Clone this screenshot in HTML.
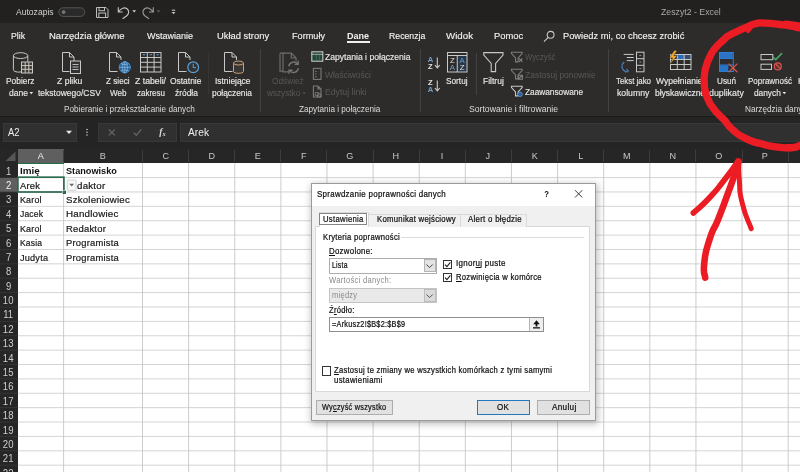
<!DOCTYPE html>
<html lang="pl"><head><meta charset="utf-8"><title>Zeszyt2 - Excel</title>
<style>
html,body{margin:0;padding:0;}
body{width:800px;height:472px;position:relative;overflow:hidden;background:#fff;font-family:"Liberation Sans", sans-serif;}
.t{position:absolute;white-space:nowrap;line-height:14px;height:14px;transform-origin:0 50%;}
#app{position:absolute;left:0;top:0;width:800px;height:472px;overflow:hidden;will-change:transform;}
.b{position:absolute;box-sizing:border-box;}
svg{position:absolute;overflow:visible;}

.dlgbtn{position:absolute;box-sizing:border-box;background:#e1e1e1;border:1px solid #adadad;}

</style></head><body>
<div id="app">
<div class="b" style="left:0.00px;top:0.00px;width:800.00px;height:23.00px;background:#222120;"></div>
<div class="b" style="left:0.00px;top:23.00px;width:800.00px;height:93.50px;background:#2d2c2b;"></div>
<div class="b" style="left:0.00px;top:116.50px;width:800.00px;height:32.50px;background:#242424;"></div>
<div class="b" style="left:0.00px;top:116.00px;width:800.00px;height:1.00px;background:#1b1b1b;"></div>
<div class="b" style="left:3.00px;top:123.00px;width:74.00px;height:19.00px;background:#303030;border:1px solid #383838;"></div>
<div class="b" style="left:98.00px;top:123.00px;width:79.00px;height:19.00px;background:#303030;border:1px solid #383838;"></div>
<div class="b" style="left:179.50px;top:123.00px;width:621.00px;height:19.00px;background:#303030;border:1px solid #383838;"></div>
<div class="b" style="left:0.00px;top:149.00px;width:800.00px;height:14.20px;background:#262626;"></div>
<div class="b" style="left:0.00px;top:163.20px;width:17.90px;height:308.80px;background:#262626;"></div>
<div class="b" style="left:17.90px;top:149.00px;width:45.70px;height:14.20px;background:#5f5f5f;"></div>
<div class="b" style="left:0.00px;top:177.58px;width:17.90px;height:14.38px;background:#5f5f5f;"></div>
<svg style="left:0;top:149px" width="18" height="14"><path d="M15.5 2.5 L15.5 12 L5.5 12 Z" fill="#555"/></svg>
<div class="b" style="left:63.10px;top:150.00px;width:1.00px;height:12.20px;background:#3d3d3d;"></div>
<div class="b" style="left:142.00px;top:150.00px;width:1.00px;height:12.20px;background:#3d3d3d;"></div>
<div class="b" style="left:188.12px;top:150.00px;width:1.00px;height:12.20px;background:#3d3d3d;"></div>
<div class="b" style="left:234.24px;top:150.00px;width:1.00px;height:12.20px;background:#3d3d3d;"></div>
<div class="b" style="left:280.36px;top:150.00px;width:1.00px;height:12.20px;background:#3d3d3d;"></div>
<div class="b" style="left:326.48px;top:150.00px;width:1.00px;height:12.20px;background:#3d3d3d;"></div>
<div class="b" style="left:372.60px;top:150.00px;width:1.00px;height:12.20px;background:#3d3d3d;"></div>
<div class="b" style="left:418.72px;top:150.00px;width:1.00px;height:12.20px;background:#3d3d3d;"></div>
<div class="b" style="left:464.84px;top:150.00px;width:1.00px;height:12.20px;background:#3d3d3d;"></div>
<div class="b" style="left:510.96px;top:150.00px;width:1.00px;height:12.20px;background:#3d3d3d;"></div>
<div class="b" style="left:557.08px;top:150.00px;width:1.00px;height:12.20px;background:#3d3d3d;"></div>
<div class="b" style="left:603.20px;top:150.00px;width:1.00px;height:12.20px;background:#3d3d3d;"></div>
<div class="b" style="left:649.32px;top:150.00px;width:1.00px;height:12.20px;background:#3d3d3d;"></div>
<div class="b" style="left:695.44px;top:150.00px;width:1.00px;height:12.20px;background:#3d3d3d;"></div>
<div class="b" style="left:741.56px;top:150.00px;width:1.00px;height:12.20px;background:#3d3d3d;"></div>
<div class="b" style="left:787.68px;top:150.00px;width:1.00px;height:12.20px;background:#3d3d3d;"></div>
<div class="b" style="left:833.80px;top:150.00px;width:1.00px;height:12.20px;background:#3d3d3d;"></div>
<svg style="left:0;top:0" width="800" height="472" fill="none" stroke-width="0.75"><path d="M63.60 163.20 V472" stroke="#bcbcbc"/><path d="M142.50 163.20 V472" stroke="#bcbcbc"/><path d="M188.62 163.20 V472" stroke="#bcbcbc"/><path d="M234.74 163.20 V472" stroke="#bcbcbc"/><path d="M280.86 163.20 V472" stroke="#bcbcbc"/><path d="M326.98 163.20 V472" stroke="#bcbcbc"/><path d="M373.10 163.20 V472" stroke="#bcbcbc"/><path d="M419.22 163.20 V472" stroke="#bcbcbc"/><path d="M465.34 163.20 V472" stroke="#bcbcbc"/><path d="M511.46 163.20 V472" stroke="#bcbcbc"/><path d="M557.58 163.20 V472" stroke="#bcbcbc"/><path d="M603.70 163.20 V472" stroke="#bcbcbc"/><path d="M649.82 163.20 V472" stroke="#bcbcbc"/><path d="M695.94 163.20 V472" stroke="#bcbcbc"/><path d="M742.06 163.20 V472" stroke="#bcbcbc"/><path d="M788.18 163.20 V472" stroke="#bcbcbc"/><path d="M17.90 177.58 H800" stroke="#c6c6c6"/><path d="M0 177.58 H17.90" stroke="#3a3a3a"/><path d="M17.90 191.96 H800" stroke="#c6c6c6"/><path d="M0 191.96 H17.90" stroke="#3a3a3a"/><path d="M17.90 206.34 H800" stroke="#c6c6c6"/><path d="M0 206.34 H17.90" stroke="#3a3a3a"/><path d="M17.90 220.72 H800" stroke="#c6c6c6"/><path d="M0 220.72 H17.90" stroke="#3a3a3a"/><path d="M17.90 235.10 H800" stroke="#c6c6c6"/><path d="M0 235.10 H17.90" stroke="#3a3a3a"/><path d="M17.90 249.48 H800" stroke="#c6c6c6"/><path d="M0 249.48 H17.90" stroke="#3a3a3a"/><path d="M17.90 263.86 H800" stroke="#c6c6c6"/><path d="M0 263.86 H17.90" stroke="#3a3a3a"/><path d="M17.90 278.24 H800" stroke="#c6c6c6"/><path d="M0 278.24 H17.90" stroke="#3a3a3a"/><path d="M17.90 292.62 H800" stroke="#c6c6c6"/><path d="M0 292.62 H17.90" stroke="#3a3a3a"/><path d="M17.90 307.00 H800" stroke="#c6c6c6"/><path d="M0 307.00 H17.90" stroke="#3a3a3a"/><path d="M17.90 321.38 H800" stroke="#c6c6c6"/><path d="M0 321.38 H17.90" stroke="#3a3a3a"/><path d="M17.90 335.76 H800" stroke="#c6c6c6"/><path d="M0 335.76 H17.90" stroke="#3a3a3a"/><path d="M17.90 350.14 H800" stroke="#c6c6c6"/><path d="M0 350.14 H17.90" stroke="#3a3a3a"/><path d="M17.90 364.52 H800" stroke="#c6c6c6"/><path d="M0 364.52 H17.90" stroke="#3a3a3a"/><path d="M17.90 378.90 H800" stroke="#c6c6c6"/><path d="M0 378.90 H17.90" stroke="#3a3a3a"/><path d="M17.90 393.28 H800" stroke="#c6c6c6"/><path d="M0 393.28 H17.90" stroke="#3a3a3a"/><path d="M17.90 407.66 H800" stroke="#c6c6c6"/><path d="M0 407.66 H17.90" stroke="#3a3a3a"/><path d="M17.90 422.04 H800" stroke="#c6c6c6"/><path d="M0 422.04 H17.90" stroke="#3a3a3a"/><path d="M17.90 436.42 H800" stroke="#c6c6c6"/><path d="M0 436.42 H17.90" stroke="#3a3a3a"/><path d="M17.90 450.80 H800" stroke="#c6c6c6"/><path d="M0 450.80 H17.90" stroke="#3a3a3a"/><path d="M17.90 465.18 H800" stroke="#c6c6c6"/><path d="M0 465.18 H17.90" stroke="#3a3a3a"/><path d="M17.90 479.56 H800" stroke="#c6c6c6"/><path d="M0 479.56 H17.90" stroke="#3a3a3a"/></svg>
<div class="b" style="left:17.90px;top:162.50px;width:45.90px;height:1.00px;background:#1f7145;"></div>
<div class="b" style="left:16.90px;top:177.58px;width:1.20px;height:14.38px;background:#1f7145;"></div>
<svg style="left:0;top:0" width="100" height="200" fill="none"><rect x="17.900" y="177.200" width="46" height="14.800" stroke="#2c6a4e" stroke-width="1.700"/><rect x="62" y="190" width="4.200" height="4.200" fill="#ffffff"/><rect x="62.600" y="190.600" width="3.400" height="3.400" fill="#2c6a4e"/></svg>
<svg style="left:0;top:0" width="100" height="200"><rect x="67.300" y="180" width="8.800" height="10.400" rx="0.800" fill="#f8f8f8" stroke="#cdcdcd" stroke-width="0.900"/><path d="M69.300 183.700 h4.800 l-2.400 2.800 z" fill="#6a6a6a"/></svg>
<div class="b" style="left:305.00px;top:179.00px;width:297.00px;height:250.00px;background:transparent;box-shadow:1px 2px 7px 1px rgba(0,0,0,0.25);left:311px;top:183px;width:285px;height:238px;"></div>
<div class="b" style="left:311.00px;top:183.00px;width:285.00px;height:238.00px;background:#f0f0f0;border:1px solid #9a9a9a;"></div>
<div class="b" style="left:312.00px;top:184.00px;width:283.00px;height:22.00px;background:#ffffff;"></div>
<div class="b" style="left:315.00px;top:226.00px;width:274.50px;height:165.50px;background:#ffffff;border:1px solid #d9d9d9;"></div>
<div class="b" style="left:319.00px;top:211.50px;width:49.50px;height:15.50px;background:#ffffff;border:1px solid #d9d9d9;border-bottom:none;"></div>
<div class="b" style="left:319.40px;top:213.00px;width:48.00px;height:12.00px;background:transparent;border:1px solid #858585;"></div>
<div class="b" style="left:368.50px;top:214.00px;width:92.50px;height:12.50px;background:#f0f0f0;border:1px solid #d9d9d9;border-bottom:none;border-left:none;"></div>
<div class="b" style="left:461.00px;top:214.00px;width:66.00px;height:12.50px;background:#f0f0f0;border:1px solid #d9d9d9;border-bottom:none;border-left:none;"></div>
<div class="b" style="left:401.00px;top:236.80px;width:183.00px;height:1.00px;background:#dcdcdc;"></div>
<div class="b" style="left:328.50px;top:258.00px;width:108.00px;height:15.50px;background:#ffffff;border:1px solid #adadad;"></div>
<div class="b" style="left:423.80px;top:259.20px;width:11.80px;height:13.20px;background:#e3e3e3;border:1px solid #b4b4b4;"></div>
<svg style="left:426.3px;top:264px" width="8" height="5"><path d="M0.5 0.5 L3.6 3.6 L6.7 0.5" fill="none" stroke="#444" stroke-width="1"/></svg>
<div class="b" style="left:328.50px;top:287.50px;width:108.00px;height:15.50px;background:#e9e9e9;border:1px solid #c4c4c4;"></div>
<div class="b" style="left:423.80px;top:288.70px;width:11.80px;height:13.20px;background:#dadada;border:1px solid #bdbdbd;"></div>
<svg style="left:426.3px;top:293.5px" width="8" height="5"><path d="M0.5 0.5 L3.6 3.6 L6.7 0.5" fill="none" stroke="#555" stroke-width="1"/></svg>
<div class="b" style="left:328.50px;top:317.00px;width:215.50px;height:15.00px;background:#ffffff;border:1px solid #8f8f8f;"></div>
<div class="b" style="left:528.50px;top:318.00px;width:14.50px;height:13.00px;background:#efefef;border-left:1px solid #b5b5b5;"></div>
<svg style="left:531.5px;top:320px" width="9" height="9"><path d="M4.5 0.3 L7.8 4.2 L5.4 4.2 L5.4 6.4 L3.6 6.4 L3.6 4.2 L1.2 4.2 Z" fill="#111"/><rect x="1" y="7.2" width="7" height="1.3" fill="#111"/></svg>
<div class="b" style="left:443.20px;top:259.60px;width:9.20px;height:9.20px;background:#ffffff;border:1px solid #333;"></div>
<svg style="left:443.2px;top:259.6px" width="10" height="10"><path d="M2 4.7 L3.9 6.7 L7.4 2.4" fill="none" stroke="#222" stroke-width="1.1"/></svg>
<div class="b" style="left:443.20px;top:273.00px;width:9.20px;height:9.20px;background:#ffffff;border:1px solid #333;"></div>
<svg style="left:443.2px;top:273px" width="10" height="10"><path d="M2 4.7 L3.9 6.7 L7.4 2.4" fill="none" stroke="#222" stroke-width="1.1"/></svg>
<div class="b" style="left:322.20px;top:366.40px;width:9.20px;height:9.20px;background:#ffffff;border:1px solid #333;"></div>
<div class="dlgbtn" style="left:315.5px;top:399.5px;width:77.5px;height:15.5px;"></div>
<div class="dlgbtn" style="left:476.5px;top:399.5px;width:53.5px;height:15.5px;border:1.8px solid #2377bd;"></div>
<div class="dlgbtn" style="left:537px;top:399.5px;width:53px;height:15.5px;"></div>
<svg style="left:0;top:0" width="200" height="24" fill="none" stroke="#c8c8c8" stroke-width="1">
<rect x="58.8" y="7.8" width="26" height="8.6" rx="4.3" stroke="#555" fill="#2a2a2a"/>
<circle cx="63.6" cy="12.1" r="1.9" fill="#767676" stroke="none"/>
<g stroke="#bdbdbd"><path d="M96.5 7.5 h9.5 l2 2 v8 h-11.5 z"/><rect x="99" y="7.5" width="5.5" height="3.2"/><rect x="98.800" y="13" width="6.800" height="4.500"/></g>
<path d="M118.300 7.200 V12 H122.600 M118.500 11.800 C121 8 124.500 7 127 8.800 C129.600 10.800 129 14 126.500 16 L122.600 18.800" stroke="#c4c4c4" stroke-width="1.100"/>
<path d="M132.300 10.300 h3.800 l-1.900 2.300z" fill="#d0d0d0" stroke="none"/>
<path d="M153.300 7.200 V12 H149 M153.100 11.800 C150.600 8 147.100 7 144.600 8.800 C142 10.800 142.600 14 145.100 16 L149 18.800" stroke="#9a9a9a" stroke-width="1.100"/>
<path d="M156.600 10.300 h3.800 l-1.900 2.300z" fill="#5a5a5a" stroke="none"/>
<path d="M171.800 10.200 h3.400" stroke="#c4c4c4" stroke-width="1.100"/><path d="M171.600 12 h3.800 l-1.900 2.200z" fill="#c4c4c4" stroke="none"/>
</svg>
<div class="b" style="left:346.50px;top:41.20px;width:23.00px;height:2.00px;background:#f0f0f0;"></div>
<svg style="left:543px;top:30px" width="13" height="13" fill="none" stroke="#c8c8c8" stroke-width="1.1"><circle cx="7.6" cy="4.8" r="3.4"/><path d="M5.2 7.3 L1 11.6"/></svg>
<div class="b" style="left:259.70px;top:49.00px;width:1.00px;height:63.00px;background:#424242;"></div>
<div class="b" style="left:419.80px;top:49.00px;width:1.00px;height:63.00px;background:#424242;"></div>
<div class="b" style="left:607.50px;top:49.00px;width:1.00px;height:63.00px;background:#424242;"></div>
<div class="b" style="left:475.50px;top:53.00px;width:1.00px;height:42.00px;background:#424242;"></div>
<div class="b" style="left:207.50px;top:53.00px;width:1.00px;height:42.00px;background:#363534;"></div>
<svg style="left:0;top:0" width="800" height="117" fill="none" stroke="#c8c8c8" stroke-width="1">
<!-- Pobierz dane -->
<path d="M13.400 55.600 v14 c0 2.800 8 3.200 8.200 1.600 M27.800 55.600 v6"/><ellipse cx="20.600" cy="55.600" rx="7.200" ry="2.900"/>
<rect x="21.5" y="62" width="11" height="11" fill="#3b3b3b"/><path d="M21.5 65.6 h11 M21.5 69.3 h11 M25.2 62 v11 M28.8 62 v11" stroke="#cfc8b8"/>
<!-- Z pliku tekstowego -->
<path d="M62.5 52.5 h7 l4.5 4.5 v4 M62.5 52.5 v19 h7 M69.5 52.5 v4.5 h4.5"/>
<rect x="70.5" y="61" width="10" height="12.5" fill="#333"/><path d="M72.5 64.5 h6 M72.5 67 h6 M72.5 69.5 h6" stroke-width="0.9"/>
<!-- Z sieci Web -->
<path d="M109.5 52.5 h7 l4.5 4.5 v3 M109.5 52.5 v19 h8 M116.5 52.5 v4.5 h4.5"/>
<circle cx="124.8" cy="67.3" r="5.6" fill="#245f96" stroke="#3f86c4"/><path d="M119.2 67.3 h11.2 M124.8 61.7 v11.2 M121 63.5 c2.5 1.5 5 1.5 7.6 0 M121 71 c2.5 -1.5 5 -1.5 7.6 0" stroke="#8fc0e8" stroke-width="0.7"/><ellipse cx="124.8" cy="67.3" rx="2.6" ry="5.6" stroke="#8fc0e8" stroke-width="0.7"/>
<!-- Z tabeli/zakresu -->
<rect x="140.5" y="52.5" width="20.5" height="19.5"/><path d="M140.5 57.5 h20.5 M140.5 62.3 h20.5 M140.5 67.1 h20.5 M147.3 52.5 v19.5 M154.1 52.5 v19.5"/>
<path d="M143 54 l1 1.3 l1-1.3 M149.8 54 l1 1.3 l1-1.3 M156.6 54 l1 1.3 l1-1.3" stroke="#5aa7e6" stroke-width="0.9"/>
<!-- Ostatnie zrodla -->
<path d="M178.5 52.5 h7 l4.5 4.5 v3 M178.5 52.5 v19 h8 M185.5 52.5 v4.5 h4.5"/>
<circle cx="193.2" cy="67.3" r="5.4" fill="#333" stroke="#5aa0d8" stroke-width="1.2"/><path d="M193.2 63.8 v3.8 h2.8" stroke="#5aa0d8"/>
<!-- Istniejace polaczenia -->
<path d="M224.5 52.5 h7.5 l4.5 4.5 v3 M224.5 52.5 v19 h8 M232 52.5 v4.5 h4.5"/>
<path d="M233.5 63 v8.5 c0 2.4 10 2.4 10 0 v-8.5" fill="#3a3632" stroke="#c9a27a"/><ellipse cx="238.5" cy="63" rx="5" ry="2" fill="#3a3632" stroke="#c9a27a"/>
<!-- Odswiez wszystko (dim) -->
<g stroke="#6c6c6c" stroke-width="1.200"><path d="M280 53.200 h4.500 M280 53.200 v18 h3"/><path d="M283 53.200 h8.300 l4.800 4.800 v3 M283 53.200 v18.600 h5 M291.300 53.200 v4.800 h4.800"/>
<path d="M288.800 66.400 a4.900 4.900 0 0 1 8.900 -2.200 M298.400 68.200 a4.900 4.900 0 0 1 -8.900 2.200 M298.200 60.800 v3.600 h-3.600 M289 73.800 v-3.600 h3.600" stroke="#757575" stroke-width="1.400"/></g>
<!-- small icons queries group -->
<rect x="311.800" y="51.800" width="11" height="9.400" fill="#23453a" stroke="#c8c8c8" stroke-width="1.100"/><path d="M311.800 54.300 h11" stroke="#c8c8c8" stroke-width="0.800"/><path d="M316.400 55 v5.600 M319.600 55 v5.600" stroke="#44705f" stroke-width="0.900"/>
<g stroke="#7a7a7a" stroke-width="1.100"><rect x="313.400" y="68.400" width="7.600" height="11"/><path d="M315.200 71.400 h1.400 M315.200 74 h1.400 M315.200 76.600 h1.400 M318.200 71.400 h0.100 M318.200 74 h0.100" />
<path d="M313.400 86 h4.600 l3 3 v8 h-7.600 z M318 86 v3 h3"/><path d="M315.200 92.600 h3.600 v3 h-3.600z M317.400 94 h3.400 v3 h-3.400z" stroke-width="0.900"/></g>
<!-- sort small -->
<path d="M437.300 57.600 v10 M434.900 65.200 l2.400 2.800 l2.400 -2.800" stroke-width="1.100"/>
<path d="M437.300 80.400 v10 M434.900 88 l2.400 2.800 l2.400 -2.800" stroke-width="1.100"/>
<!-- Sortuj big -->
<rect x="457.400" y="55.600" width="9.400" height="16.200" fill="#27384a" stroke="none"/>
<rect x="447.500" y="52.500" width="19.500" height="19.500"/><path d="M447.500 55.500 h19.500 M457.250 55.500 v16.500"/>
<!-- Filtruj big -->
<path d="M483.800 52.600 h19.200 v2.400 l-7.400 8.400 v8.200 h-4.400 v-8.200 l-7.400 -8.400 z" stroke-width="1.100"/>
<!-- small funnels -->
<g stroke="#7d7d7d" stroke-width="1.100"><path d="M511.500 52.300 h10.600 v1.200 l-4 4.400 v4 h-2.600 v-4 l-4 -4.400 z"/><path d="M519 58.500 l3.400 3.400 M522.400 58.500 l-3.400 3.400" stroke="#808080"/>
<path d="M511.500 69.300 h10.600 v1.200 l-4 4.400 v4 h-2.600 v-4 l-4 -4.400 z"/><path d="M518.400 75.200 h4 v4 h-4z M518.400 79.200 l4 -4" stroke="#808080" fill="#2d2c2b"/></g>
<path d="M511.500 86.300 h10.600 v1.200 l-4 4.400 v4 h-2.600 v-4 l-4 -4.400 z" stroke-width="1.100"/><circle cx="520" cy="94.300" r="2.300" fill="#2d5f94" stroke="#5a93cc" stroke-width="0.900"/>
<!-- Tekst jako kolumny -->
<path d="M623.700 54.400 h10 M626.800 57.500 h6.900 M626.800 60.600 h6.900" stroke-width="1"/>
<path d="M624.300 62 c-3.500 2.500 -3.200 8.500 2.400 9.600 M624.800 71.800 l3.600 -0.200 M628.600 71.500 l-2 -2.600" stroke="#4a7fb5" stroke-width="1.200"/>
<rect x="636.500" y="52.200" width="7.500" height="19.600"/><path d="M636.500 58.700 h7.500 M636.500 65.300 h7.500"/><path d="M639.300 55.500 h2 M639.300 62 h2 M639.300 68.600 h2" stroke="#8d8d8d"/>
<!-- Wypelnianie blyskawiczne -->
<rect x="677.500" y="54.800" width="7" height="4.700" fill="#2c6cb8" stroke="none"/><rect x="684.500" y="54.800" width="6.300" height="4.700" fill="#34506e" stroke="none"/>
<rect x="670.500" y="54.500" width="20.500" height="15"/><path d="M670.500 59.500 h20.500 M670.500 64.500 h20.500 M677.300 54.500 v15 M684.200 54.500 v15"/>
<path d="M674.200 50.400 l-5 7.600 h3.300 l-2.600 6.400 l7.400 -9 h-3.400 l3.300 -5 z" fill="#f2a62a" stroke="#2e2e2e" stroke-width="0.500"/>
<!-- Usun duplikaty -->
<rect x="719.500" y="52.500" width="13.800" height="19" stroke="#2f7fd6"/><path d="M719.500 58.500 h13.800 M719.500 65 h13.800" stroke="#2f7fd6"/><rect x="720" y="53" width="12.800" height="5.200" fill="#2a72c4" stroke="none"/><rect x="720" y="65.300" width="8.300" height="5.800" fill="#2a72c4" stroke="none"/>
<path d="M728.600 63.600 l8.800 8.600 M737.400 63.600 l-8.800 8.600" stroke="#d9534f" stroke-width="1.300"/>
<!-- Poprawnosc danych -->
<rect x="761" y="54.500" width="11.800" height="5.200"/><rect x="761" y="64.200" width="10.500" height="5.200"/>
<path d="M773 57 l2.700 2.600 l6.400 -6.500" stroke="#48a868" stroke-width="1.500"/>
<circle cx="777.800" cy="66.400" r="3.500" fill="#5a2f2d" stroke="#d9534f" stroke-width="1.200"/><path d="M775.700 64 l4.600 4.600" stroke="#d9534f" stroke-width="1.300"/>
</svg>
<svg style="left:0;top:116px" width="200" height="32" fill="none">
<path d="M66 14.800 h6 l-3 3.300 z" fill="#e8e8e8"/>
<circle cx="87" cy="13.500" r="0.750" fill="#d0d0d0"/><circle cx="87" cy="16.200" r="0.750" fill="#d0d0d0"/><circle cx="87" cy="18.900" r="0.750" fill="#d0d0d0"/>
<path d="M108.800 13.300 l6 6 M114.800 13.300 l-6 6" stroke="#6a6a6a" stroke-width="1.100"/>
<path d="M133.800 16.600 l2.500 2.700 l5 -6" stroke="#6a6a6a" stroke-width="1.200"/>
</svg><svg style="left:0;top:0" width="800" height="472">
<path d="M29.500 92 h3.600 l-1.800 2.200z" fill="#e8e8e8"/>
<path d="M302.500 92.200 h3.200 l-1.600 2z" fill="#565656"/>
<path d="M782.500 92 h3.600 l-1.800 2.200z" fill="#e8e8e8"/>
<path d="M575 190.200 l7.300 7.300 M582.300 190.200 l-7.300 7.300" stroke="#222" stroke-width="0.900" fill="none"/>
</svg>
<span class="t" id="t0" style="left:15.80px;top:5.00px;font-size:9.1px;color:#d0d0d0;font-weight:400;transform:scaleX(0.9415);">Autozapis</span>
<span class="t" id="t1" style="left:661.00px;top:4.60px;font-size:9.3px;color:#a9a9a9;font-weight:400;transform:scaleX(0.9395);">Zeszyt2  -  Excel</span>
<span class="t" id="t2" style="left:11.40px;top:28.60px;font-size:9.9px;color:#f0f0f0;font-weight:400;transform:scaleX(0.8793);-webkit-text-stroke:0.15px #f0f0f0;">Plik</span>
<span class="t" id="t3" style="left:49.00px;top:28.60px;font-size:9.9px;color:#f0f0f0;font-weight:400;transform:scaleX(0.9618);-webkit-text-stroke:0.15px #f0f0f0;">Narzędzia główne</span>
<span class="t" id="t4" style="left:146.90px;top:28.60px;font-size:9.9px;color:#f0f0f0;font-weight:400;transform:scaleX(0.9129);-webkit-text-stroke:0.15px #f0f0f0;">Wstawianie</span>
<span class="t" id="t5" style="left:216.50px;top:28.60px;font-size:9.9px;color:#f0f0f0;font-weight:400;transform:scaleX(0.9492);-webkit-text-stroke:0.15px #f0f0f0;">Układ strony</span>
<span class="t" id="t6" style="left:292.00px;top:28.60px;font-size:9.9px;color:#f0f0f0;font-weight:400;transform:scaleX(0.9251);-webkit-text-stroke:0.15px #f0f0f0;">Formuły</span>
<span class="t" id="t7" style="left:346.90px;top:28.60px;font-size:9.9px;color:#f0f0f0;font-weight:700;transform:scaleX(0.9149);">Dane</span>
<span class="t" id="t8" style="left:388.60px;top:28.60px;font-size:9.9px;color:#f0f0f0;font-weight:400;transform:scaleX(0.8817);-webkit-text-stroke:0.15px #f0f0f0;">Recenzja</span>
<span class="t" id="t9" style="left:446.00px;top:28.60px;font-size:9.9px;color:#f0f0f0;font-weight:400;transform:scaleX(0.9841);-webkit-text-stroke:0.15px #f0f0f0;">Widok</span>
<span class="t" id="t10" style="left:493.50px;top:28.60px;font-size:9.9px;color:#f0f0f0;font-weight:400;transform:scaleX(0.9501);-webkit-text-stroke:0.15px #f0f0f0;">Pomoc</span>
<span class="t" id="t11" style="left:562.60px;top:28.60px;font-size:9.9px;color:#f0f0f0;font-weight:400;transform:scaleX(0.9405);-webkit-text-stroke:0.15px #f0f0f0;">Powiedz mi, co chcesz zrobić</span>
<span class="t" id="t12" style="left:6.40px;top:74.40px;font-size:9.4px;color:#e8e8e8;font-weight:400;transform:scaleX(0.8932);-webkit-text-stroke:0.15px #e8e8e8;">Pobierz</span>
<span class="t" id="t13" style="left:8.90px;top:85.90px;font-size:9.4px;color:#e8e8e8;font-weight:400;transform:scaleX(0.9157);-webkit-text-stroke:0.15px #e8e8e8;">dane</span>
<span class="t" id="t14" style="left:57.20px;top:74.40px;font-size:9.4px;color:#e8e8e8;font-weight:400;transform:scaleX(0.9195);-webkit-text-stroke:0.15px #e8e8e8;">Z pliku</span>
<span class="t" id="t15" style="left:38.10px;top:85.90px;font-size:9.4px;color:#e8e8e8;font-weight:400;transform:scaleX(0.9060);-webkit-text-stroke:0.15px #e8e8e8;">tekstowego/CSV</span>
<span class="t" id="t16" style="left:106.00px;top:74.40px;font-size:9.4px;color:#e8e8e8;font-weight:400;transform:scaleX(0.8710);-webkit-text-stroke:0.15px #e8e8e8;">Z sieci</span>
<span class="t" id="t17" style="left:109.80px;top:85.90px;font-size:9.4px;color:#e8e8e8;font-weight:400;transform:scaleX(0.8635);-webkit-text-stroke:0.15px #e8e8e8;">Web</span>
<span class="t" id="t18" style="left:134.70px;top:74.40px;font-size:9.4px;color:#e8e8e8;font-weight:400;transform:scaleX(0.9293);-webkit-text-stroke:0.15px #e8e8e8;">Z tabeli/</span>
<span class="t" id="t19" style="left:136.70px;top:85.90px;font-size:9.4px;color:#e8e8e8;font-weight:400;transform:scaleX(0.8529);-webkit-text-stroke:0.15px #e8e8e8;">zakresu</span>
<span class="t" id="t20" style="left:170.40px;top:74.40px;font-size:9.4px;color:#e8e8e8;font-weight:400;transform:scaleX(0.8991);-webkit-text-stroke:0.15px #e8e8e8;">Ostatnie</span>
<span class="t" id="t21" style="left:174.80px;top:85.90px;font-size:9.4px;color:#e8e8e8;font-weight:400;transform:scaleX(0.8964);-webkit-text-stroke:0.15px #e8e8e8;">źródła</span>
<span class="t" id="t22" style="left:214.50px;top:74.40px;font-size:9.4px;color:#e8e8e8;font-weight:400;transform:scaleX(0.8963);-webkit-text-stroke:0.15px #e8e8e8;">Istniejące</span>
<span class="t" id="t23" style="left:212.00px;top:85.90px;font-size:9.4px;color:#e8e8e8;font-weight:400;transform:scaleX(0.8923);-webkit-text-stroke:0.15px #e8e8e8;">połączenia</span>
<span class="t" id="t24" style="left:445.70px;top:74.40px;font-size:9.4px;color:#e8e8e8;font-weight:400;transform:scaleX(0.8816);-webkit-text-stroke:0.15px #e8e8e8;">Sortuj</span>
<span class="t" id="t25" style="left:483.40px;top:74.40px;font-size:9.4px;color:#e8e8e8;font-weight:400;transform:scaleX(0.9074);-webkit-text-stroke:0.15px #e8e8e8;">Filtruj</span>
<span class="t" id="t26" style="left:615.80px;top:74.40px;font-size:9.4px;color:#e8e8e8;font-weight:400;transform:scaleX(0.8396);-webkit-text-stroke:0.15px #e8e8e8;">Tekst jako</span>
<span class="t" id="t27" style="left:617.30px;top:85.90px;font-size:9.4px;color:#e8e8e8;font-weight:400;transform:scaleX(0.9249);-webkit-text-stroke:0.15px #e8e8e8;">kolumny</span>
<span class="t" id="t28" style="left:656.40px;top:74.40px;font-size:9.4px;color:#e8e8e8;font-weight:400;transform:scaleX(0.9137);-webkit-text-stroke:0.15px #e8e8e8;">Wypełnianie</span>
<span class="t" id="t29" style="left:655.40px;top:85.90px;font-size:9.4px;color:#e8e8e8;font-weight:400;transform:scaleX(0.9070);-webkit-text-stroke:0.15px #e8e8e8;">błyskawiczne</span>
<span class="t" id="t30" style="left:716.90px;top:74.40px;font-size:9.4px;color:#e8e8e8;font-weight:400;transform:scaleX(0.8725);-webkit-text-stroke:0.15px #e8e8e8;">Usuń</span>
<span class="t" id="t31" style="left:708.80px;top:85.90px;font-size:9.4px;color:#e8e8e8;font-weight:400;transform:scaleX(0.9401);-webkit-text-stroke:0.15px #e8e8e8;">duplikaty</span>
<span class="t" id="t32" style="left:747.90px;top:74.40px;font-size:9.4px;color:#e8e8e8;font-weight:400;transform:scaleX(0.8528);-webkit-text-stroke:0.15px #e8e8e8;">Poprawność</span>
<span class="t" id="t33" style="left:753.70px;top:85.90px;font-size:9.4px;color:#e8e8e8;font-weight:400;transform:scaleX(0.8864);-webkit-text-stroke:0.15px #e8e8e8;">danych</span>
<span class="t" id="t34" style="left:797.70px;top:74.40px;font-size:9.4px;color:#e8e8e8;font-weight:400;transform:scaleX(0.9315);-webkit-text-stroke:0.15px #e8e8e8;">Konsoliduj</span>
<span class="t" id="t35" style="left:272.00px;top:74.40px;font-size:9.4px;color:#585858;font-weight:400;transform:scaleX(0.8817);">Odśwież</span>
<span class="t" id="t36" style="left:267.30px;top:85.90px;font-size:9.4px;color:#585858;font-weight:400;transform:scaleX(0.8730);">wszystko</span>
<span class="t" id="t37" style="left:325.00px;top:50.30px;font-size:9.4px;color:#e8e8e8;font-weight:400;transform:scaleX(0.9164);-webkit-text-stroke:0.15px #e8e8e8;">Zapytania i połączenia</span>
<span class="t" id="t38" style="left:325.00px;top:67.50px;font-size:9.4px;color:#585858;font-weight:400;transform:scaleX(0.8972);">Właściwości</span>
<span class="t" id="t39" style="left:325.00px;top:84.60px;font-size:9.4px;color:#585858;font-weight:400;transform:scaleX(0.9261);">Edytuj linki</span>
<span class="t" id="t40" style="left:525.00px;top:50.30px;font-size:9.4px;color:#585858;font-weight:400;transform:scaleX(0.8264);">Wyczyść</span>
<span class="t" id="t41" style="left:525.00px;top:67.50px;font-size:9.4px;color:#585858;font-weight:400;transform:scaleX(0.9042);">Zastosuj ponownie</span>
<span class="t" id="t42" style="left:525.00px;top:84.60px;font-size:9.4px;color:#e8e8e8;font-weight:400;transform:scaleX(0.8832);-webkit-text-stroke:0.15px #e8e8e8;">Zaawansowane</span>
<span class="t" id="t43" style="left:63.50px;top:102.40px;font-size:9.3px;color:#dcdcdc;font-weight:400;transform:scaleX(0.8825);">Pobieranie i przekształcanie danych</span>
<span class="t" id="t44" style="left:298.60px;top:102.40px;font-size:9.3px;color:#dcdcdc;font-weight:400;transform:scaleX(0.8799);">Zapytania i połączenia</span>
<span class="t" id="t45" style="left:468.60px;top:102.40px;font-size:9.3px;color:#dcdcdc;font-weight:400;transform:scaleX(0.9309);">Sortowanie i filtrowanie</span>
<span class="t" id="t46" style="left:744.90px;top:102.40px;font-size:9.3px;color:#dcdcdc;font-weight:400;transform:scaleX(0.8882);">Narzędzia danych</span>
<span class="t" id="t47" style="left:430.40px;top:52.90px;font-size:7.6px;color:#6f9fcb;font-weight:700;transform:translateX(-50%);">A</span>
<span class="t" id="t48" style="left:430.40px;top:59.50px;font-size:7.6px;color:#e0e0e0;font-weight:700;transform:translateX(-50%);">Z</span>
<span class="t" id="t49" style="left:430.40px;top:75.90px;font-size:7.6px;color:#e0e0e0;font-weight:700;transform:translateX(-50%);">Z</span>
<span class="t" id="t50" style="left:430.40px;top:82.50px;font-size:7.6px;color:#6f9fcb;font-weight:700;transform:translateX(-50%);">A</span>
<span class="t" id="t51" style="left:452.40px;top:53.60px;font-size:7.8px;color:#e0e0e0;font-weight:400;transform:translateX(-50%);">Z</span>
<span class="t" id="t52" style="left:452.40px;top:60.60px;font-size:7.8px;color:#6f9fcb;font-weight:400;transform:translateX(-50%);">A</span>
<span class="t" id="t53" style="left:462.20px;top:53.60px;font-size:7.8px;color:#6f9fcb;font-weight:400;transform:translateX(-50%);">A</span>
<span class="t" id="t54" style="left:462.20px;top:60.60px;font-size:7.8px;color:#e0e0e0;font-weight:400;transform:translateX(-50%);">Z</span>
<span class="t" id="t55" style="left:7.90px;top:125.50px;font-size:10.3px;color:#f0f0f0;font-weight:400;transform:scaleX(0.9200);">A2</span>
<span class="t" id="t56" style="left:188.00px;top:125.50px;font-size:10.3px;color:#f0f0f0;font-weight:400;transform:scaleX(0.9912);">Arek</span>
<span class="t" id="t57" style="left:160.80px;top:125.30px;font-size:9.6px;color:#d8d8d8;font-weight:700;transform:translateX(-50%);font-family:'Liberation Serif',serif;font-style:italic;">f</span>
<span class="t" id="t58" style="left:164.00px;top:126.80px;font-size:6.4px;color:#d8d8d8;font-weight:700;transform:translateX(-50%);font-family:'Liberation Serif',serif;font-style:italic;">x</span>
<span class="t" id="t59" style="left:40.75px;top:149.30px;font-size:9.9px;color:#f2f2f2;font-weight:400;transform:translateX(-50%);transform:translateX(-50%) scaleX(0.92);">A</span>
<span class="t" id="t60" style="left:103.05px;top:149.30px;font-size:9.9px;color:#c9c9c9;font-weight:400;transform:translateX(-50%);transform:translateX(-50%) scaleX(0.92);">B</span>
<span class="t" id="t61" style="left:165.56px;top:149.30px;font-size:9.9px;color:#c9c9c9;font-weight:400;transform:translateX(-50%);transform:translateX(-50%) scaleX(0.92);">C</span>
<span class="t" id="t62" style="left:211.68px;top:149.30px;font-size:9.9px;color:#c9c9c9;font-weight:400;transform:translateX(-50%);transform:translateX(-50%) scaleX(0.92);">D</span>
<span class="t" id="t63" style="left:257.80px;top:149.30px;font-size:9.9px;color:#c9c9c9;font-weight:400;transform:translateX(-50%);transform:translateX(-50%) scaleX(0.92);">E</span>
<span class="t" id="t64" style="left:303.92px;top:149.30px;font-size:9.9px;color:#c9c9c9;font-weight:400;transform:translateX(-50%);transform:translateX(-50%) scaleX(0.92);">F</span>
<span class="t" id="t65" style="left:350.04px;top:149.30px;font-size:9.9px;color:#c9c9c9;font-weight:400;transform:translateX(-50%);transform:translateX(-50%) scaleX(0.92);">G</span>
<span class="t" id="t66" style="left:396.16px;top:149.30px;font-size:9.9px;color:#c9c9c9;font-weight:400;transform:translateX(-50%);transform:translateX(-50%) scaleX(0.92);">H</span>
<span class="t" id="t67" style="left:442.28px;top:149.30px;font-size:9.9px;color:#c9c9c9;font-weight:400;transform:translateX(-50%);transform:translateX(-50%) scaleX(0.92);">I</span>
<span class="t" id="t68" style="left:488.40px;top:149.30px;font-size:9.9px;color:#c9c9c9;font-weight:400;transform:translateX(-50%);transform:translateX(-50%) scaleX(0.92);">J</span>
<span class="t" id="t69" style="left:534.52px;top:149.30px;font-size:9.9px;color:#c9c9c9;font-weight:400;transform:translateX(-50%);transform:translateX(-50%) scaleX(0.92);">K</span>
<span class="t" id="t70" style="left:580.64px;top:149.30px;font-size:9.9px;color:#c9c9c9;font-weight:400;transform:translateX(-50%);transform:translateX(-50%) scaleX(0.92);">L</span>
<span class="t" id="t71" style="left:626.76px;top:149.30px;font-size:9.9px;color:#c9c9c9;font-weight:400;transform:translateX(-50%);transform:translateX(-50%) scaleX(0.92);">M</span>
<span class="t" id="t72" style="left:672.88px;top:149.30px;font-size:9.9px;color:#c9c9c9;font-weight:400;transform:translateX(-50%);transform:translateX(-50%) scaleX(0.92);">N</span>
<span class="t" id="t73" style="left:719.00px;top:149.30px;font-size:9.9px;color:#c9c9c9;font-weight:400;transform:translateX(-50%);transform:translateX(-50%) scaleX(0.92);">O</span>
<span class="t" id="t74" style="left:765.12px;top:149.30px;font-size:9.9px;color:#c9c9c9;font-weight:400;transform:translateX(-50%);transform:translateX(-50%) scaleX(0.92);">P</span>
<span class="t" id="t75" style="left:811.24px;top:149.30px;font-size:9.9px;color:#c9c9c9;font-weight:400;transform:translateX(-50%);transform:translateX(-50%) scaleX(0.92);">Q</span>
<span class="t" id="t76" style="left:8.90px;top:163.69px;font-size:11.1px;color:#d0d0d0;font-weight:400;transform:translateX(-50%);transform:translateX(-50%) scaleX(0.86);">1</span>
<span class="t" id="t77" style="left:8.90px;top:178.07px;font-size:11.1px;color:#f2f2f2;font-weight:400;transform:translateX(-50%);transform:translateX(-50%) scaleX(0.86);">2</span>
<span class="t" id="t78" style="left:8.90px;top:192.45px;font-size:11.1px;color:#d0d0d0;font-weight:400;transform:translateX(-50%);transform:translateX(-50%) scaleX(0.86);">3</span>
<span class="t" id="t79" style="left:8.90px;top:206.83px;font-size:11.1px;color:#d0d0d0;font-weight:400;transform:translateX(-50%);transform:translateX(-50%) scaleX(0.86);">4</span>
<span class="t" id="t80" style="left:8.90px;top:221.21px;font-size:11.1px;color:#d0d0d0;font-weight:400;transform:translateX(-50%);transform:translateX(-50%) scaleX(0.86);">5</span>
<span class="t" id="t81" style="left:8.90px;top:235.59px;font-size:11.1px;color:#d0d0d0;font-weight:400;transform:translateX(-50%);transform:translateX(-50%) scaleX(0.86);">6</span>
<span class="t" id="t82" style="left:8.90px;top:249.97px;font-size:11.1px;color:#d0d0d0;font-weight:400;transform:translateX(-50%);transform:translateX(-50%) scaleX(0.86);">7</span>
<span class="t" id="t83" style="left:8.90px;top:264.35px;font-size:11.1px;color:#d0d0d0;font-weight:400;transform:translateX(-50%);transform:translateX(-50%) scaleX(0.86);">8</span>
<span class="t" id="t84" style="left:8.90px;top:278.73px;font-size:11.1px;color:#d0d0d0;font-weight:400;transform:translateX(-50%);transform:translateX(-50%) scaleX(0.86);">9</span>
<span class="t" id="t85" style="left:8.90px;top:293.11px;font-size:11.1px;color:#d0d0d0;font-weight:400;transform:translateX(-50%);transform:translateX(-50%) scaleX(0.86);">10</span>
<span class="t" id="t86" style="left:8.90px;top:307.49px;font-size:11.1px;color:#d0d0d0;font-weight:400;transform:translateX(-50%);transform:translateX(-50%) scaleX(0.86);">11</span>
<span class="t" id="t87" style="left:8.90px;top:321.87px;font-size:11.1px;color:#d0d0d0;font-weight:400;transform:translateX(-50%);transform:translateX(-50%) scaleX(0.86);">12</span>
<span class="t" id="t88" style="left:8.90px;top:336.25px;font-size:11.1px;color:#d0d0d0;font-weight:400;transform:translateX(-50%);transform:translateX(-50%) scaleX(0.86);">13</span>
<span class="t" id="t89" style="left:8.90px;top:350.63px;font-size:11.1px;color:#d0d0d0;font-weight:400;transform:translateX(-50%);transform:translateX(-50%) scaleX(0.86);">14</span>
<span class="t" id="t90" style="left:8.90px;top:365.01px;font-size:11.1px;color:#d0d0d0;font-weight:400;transform:translateX(-50%);transform:translateX(-50%) scaleX(0.86);">15</span>
<span class="t" id="t91" style="left:8.90px;top:379.39px;font-size:11.1px;color:#d0d0d0;font-weight:400;transform:translateX(-50%);transform:translateX(-50%) scaleX(0.86);">16</span>
<span class="t" id="t92" style="left:8.90px;top:393.77px;font-size:11.1px;color:#d0d0d0;font-weight:400;transform:translateX(-50%);transform:translateX(-50%) scaleX(0.86);">17</span>
<span class="t" id="t93" style="left:8.90px;top:408.15px;font-size:11.1px;color:#d0d0d0;font-weight:400;transform:translateX(-50%);transform:translateX(-50%) scaleX(0.86);">18</span>
<span class="t" id="t94" style="left:8.90px;top:422.53px;font-size:11.1px;color:#d0d0d0;font-weight:400;transform:translateX(-50%);transform:translateX(-50%) scaleX(0.86);">19</span>
<span class="t" id="t95" style="left:8.90px;top:436.91px;font-size:11.1px;color:#d0d0d0;font-weight:400;transform:translateX(-50%);transform:translateX(-50%) scaleX(0.86);">20</span>
<span class="t" id="t96" style="left:8.90px;top:451.29px;font-size:11.1px;color:#d0d0d0;font-weight:400;transform:translateX(-50%);transform:translateX(-50%) scaleX(0.86);">21</span>
<span class="t" id="t97" style="left:8.90px;top:465.67px;font-size:11.1px;color:#d0d0d0;font-weight:400;transform:translateX(-50%);transform:translateX(-50%) scaleX(0.86);">22</span>
<span class="t" id="t98" style="left:19.80px;top:164.34px;font-size:9.9px;color:#111;font-weight:700;transform:scaleX(1.0017);">Imię</span>
<span class="t" id="t99" style="left:65.60px;top:164.34px;font-size:9.9px;color:#111;font-weight:700;transform:scaleX(0.9257);">Stanowisko</span>
<span class="t" id="t100" style="left:19.80px;top:178.72px;font-size:9.1px;color:#1a1a1a;font-weight:400;transform:scaleX(1.0359);letter-spacing:0.2px;-webkit-text-stroke:0.2px #1a1a1a;">Arek</span>
<span class="t" id="t101" style="left:77.20px;top:178.72px;font-size:9.1px;color:#1a1a1a;font-weight:400;transform:scaleX(1.0723);letter-spacing:0.2px;-webkit-text-stroke:0.2px #1a1a1a;">daktor</span>
<span class="t" id="t102" style="left:19.80px;top:193.10px;font-size:9.1px;color:#1a1a1a;font-weight:400;transform:scaleX(0.9760);letter-spacing:0.2px;-webkit-text-stroke:0.2px #1a1a1a;">Karol</span>
<span class="t" id="t103" style="left:65.60px;top:193.10px;font-size:9.1px;color:#1a1a1a;font-weight:400;transform:scaleX(1.0625);letter-spacing:0.2px;-webkit-text-stroke:0.2px #1a1a1a;">Szkoleniowiec</span>
<span class="t" id="t104" style="left:19.80px;top:207.48px;font-size:9.1px;color:#1a1a1a;font-weight:400;transform:scaleX(0.9368);letter-spacing:0.2px;-webkit-text-stroke:0.2px #1a1a1a;">Jacek</span>
<span class="t" id="t105" style="left:65.60px;top:207.48px;font-size:9.1px;color:#1a1a1a;font-weight:400;transform:scaleX(1.0731);letter-spacing:0.2px;-webkit-text-stroke:0.2px #1a1a1a;">Handlowiec</span>
<span class="t" id="t106" style="left:19.80px;top:221.86px;font-size:9.1px;color:#1a1a1a;font-weight:400;transform:scaleX(0.9760);letter-spacing:0.2px;-webkit-text-stroke:0.2px #1a1a1a;">Karol</span>
<span class="t" id="t107" style="left:65.60px;top:221.86px;font-size:9.1px;color:#1a1a1a;font-weight:400;transform:scaleX(1.0390);letter-spacing:0.2px;-webkit-text-stroke:0.2px #1a1a1a;">Redaktor</span>
<span class="t" id="t108" style="left:19.80px;top:236.24px;font-size:9.1px;color:#1a1a1a;font-weight:400;transform:scaleX(0.9347);letter-spacing:0.2px;-webkit-text-stroke:0.2px #1a1a1a;">Kasia</span>
<span class="t" id="t109" style="left:65.60px;top:236.24px;font-size:9.1px;color:#1a1a1a;font-weight:400;transform:scaleX(1.0345);letter-spacing:0.2px;-webkit-text-stroke:0.2px #1a1a1a;">Programista</span>
<span class="t" id="t110" style="left:19.80px;top:250.62px;font-size:9.1px;color:#1a1a1a;font-weight:400;transform:scaleX(1.0071);letter-spacing:0.2px;-webkit-text-stroke:0.2px #1a1a1a;">Judyta</span>
<span class="t" id="t111" style="left:65.60px;top:250.62px;font-size:9.1px;color:#1a1a1a;font-weight:400;transform:scaleX(1.0345);letter-spacing:0.2px;-webkit-text-stroke:0.2px #1a1a1a;">Programista</span>
<span class="t" id="t112" style="left:317.00px;top:187.90px;font-size:8.2px;color:#111;font-weight:400;transform:scaleX(0.9680);letter-spacing:0.3px;-webkit-text-stroke:0.22px #111;">Sprawdzanie poprawności danych</span>
<span class="t" id="t113" style="left:546.50px;top:187.00px;font-size:9px;color:#111;font-weight:700;transform:translateX(-50%);transform:translateX(-50%) scaleX(0.85);">?</span>
<span class="t" id="t114" style="left:322.80px;top:212.60px;font-size:8.2px;color:#111;font-weight:400;transform:scaleX(0.9455);letter-spacing:0.3px;-webkit-text-stroke:0.22px #111;">Ustawienia</span>
<span class="t" id="t115" style="left:376.50px;top:212.80px;font-size:8.2px;color:#111;font-weight:400;transform:scaleX(0.9459);letter-spacing:0.3px;-webkit-text-stroke:0.22px #111;">Komunikat wejściowy</span>
<span class="t" id="t116" style="left:467.50px;top:212.80px;font-size:8.2px;color:#111;font-weight:400;transform:scaleX(0.9576);letter-spacing:0.3px;-webkit-text-stroke:0.22px #111;">Alert o błędzie</span>
<span class="t" id="t117" style="left:322.50px;top:230.70px;font-size:8.2px;color:#111;font-weight:400;transform:scaleX(0.9339);letter-spacing:0.3px;-webkit-text-stroke:0.22px #111;">Kryteria poprawności</span>
<span class="t" id="t118" style="left:328.80px;top:245.00px;font-size:8.2px;color:#111;font-weight:400;transform:scaleX(0.9564);letter-spacing:0.3px;-webkit-text-stroke:0.22px #111;"><u>D</u>ozwolone:</span>
<span class="t" id="t119" style="left:332.00px;top:259.20px;font-size:8.2px;color:#111;font-weight:400;transform:scaleX(0.8406);letter-spacing:0.3px;-webkit-text-stroke:0.22px #111;">Lista</span>
<span class="t" id="t120" style="left:328.80px;top:273.80px;font-size:8.2px;color:#8a8a8a;font-weight:400;transform:scaleX(0.9287);letter-spacing:0.3px;">Wartości danych:</span>
<span class="t" id="t121" style="left:332.00px;top:288.60px;font-size:8.2px;color:#8a8a8a;font-weight:400;transform:scaleX(0.9158);letter-spacing:0.3px;">między</span>
<span class="t" id="t122" style="left:328.80px;top:303.70px;font-size:8.2px;color:#111;font-weight:400;transform:scaleX(0.9272);letter-spacing:0.3px;-webkit-text-stroke:0.22px #111;">Ź<u>r</u>ódło:</span>
<span class="t" id="t123" style="left:332.40px;top:318.00px;font-size:8.2px;color:#111;font-weight:400;transform:scaleX(0.8878);letter-spacing:0.3px;-webkit-text-stroke:0.22px #111;">=Arkusz2!$B$2:$B$9</span>
<span class="t" id="t124" style="left:455.90px;top:257.20px;font-size:8.2px;color:#111;font-weight:400;transform:scaleX(0.9714);letter-spacing:0.3px;-webkit-text-stroke:0.22px #111;">Ignor<u>u</u>j puste</span>
<span class="t" id="t125" style="left:455.90px;top:270.90px;font-size:8.2px;color:#111;font-weight:400;transform:scaleX(0.9340);letter-spacing:0.3px;-webkit-text-stroke:0.22px #111;"><u>R</u>ozwinięcia w komórce</span>
<span class="t" id="t126" style="left:334.40px;top:363.80px;font-size:8.2px;color:#111;font-weight:400;transform:scaleX(0.9255);letter-spacing:0.3px;-webkit-text-stroke:0.22px #111;"><u>Z</u>astosuj te zmiany we wszystkich komórkach z tymi samymi</span>
<span class="t" id="t127" style="left:334.40px;top:374.00px;font-size:8.2px;color:#111;font-weight:400;transform:scaleX(0.9541);letter-spacing:0.3px;-webkit-text-stroke:0.22px #111;">ustawieniami</span>
<span class="t" id="t128" style="left:321.60px;top:400.80px;font-size:8.2px;color:#111;font-weight:400;transform:scaleX(0.8879);letter-spacing:0.3px;-webkit-text-stroke:0.22px #111;">Wy<u>c</u>zyść wszystko</span>
<span class="t" id="t129" style="left:497.30px;top:401.00px;font-size:8.2px;color:#111;font-weight:400;transform:scaleX(0.9809);letter-spacing:0.3px;-webkit-text-stroke:0.22px #111;">OK</span>
<span class="t" id="t130" style="left:552.00px;top:401.00px;font-size:8.2px;color:#111;font-weight:400;transform:scaleX(0.9975);letter-spacing:0.3px;-webkit-text-stroke:0.22px #111;">Anuluj</span>
<svg style="left:0;top:0" width="800" height="472" fill="none" stroke="#ec1c24" stroke-linecap="round" stroke-linejoin="round">
<path d="M808.0 29.5 C805.3 29.0 806.0 29.2 800.0 28.0 C794.0 26.8 796.7 27.2 790.0 26.0 C783.3 24.8 788.0 25.4 780.0 24.5 C772.0 23.6 774.0 23.5 766.0 23.2 C758.0 22.9 762.3 22.3 756.0 23.6 C749.7 24.9 753.0 24.5 747.0 27.0 C741.0 29.5 744.0 28.2 738.0 31.0 C732.0 33.8 733.8 32.5 729.0 35.5 C724.2 38.5 728.2 35.7 723.5 40.0 C718.8 44.3 719.6 42.8 715.0 48.5 C710.4 54.2 712.6 51.4 709.8 57.0 C707.0 62.6 708.2 59.8 706.5 65.4 C704.8 71.0 705.3 68.2 704.6 73.9 C703.9 79.6 704.1 76.8 704.3 82.4 C704.5 88.0 704.0 85.2 705.2 90.8 C706.4 96.4 705.4 93.6 708.0 99.3 C710.6 105.0 708.8 102.1 713.0 107.8 C717.2 113.5 716.7 112.2 720.5 116.3 C724.3 120.4 720.1 115.4 724.3 120.0 C728.5 124.6 725.8 123.8 733.0 130.0 C740.2 136.2 736.8 134.1 746.0 138.6 C755.2 143.1 750.6 140.9 760.5 143.6 C770.4 146.3 766.0 145.5 775.8 146.8 C785.6 148.1 781.9 148.0 790.0 147.6 C798.1 147.2 794.0 147.4 800.0 145.5 C806.0 143.6 805.3 143.2 808.0 142.0" stroke-width="7.300"/>
<path d="M803 26 C797 25 792 24 786 23.500 M790 148.500 C796 148 801 146 806 143" stroke-width="6"/>
<path d="M750.500 27.500 L748 30.500" stroke-width="5"/>
<path d="M705.2 277.6 C704.9 272.7 702.8 275.7 704.3 262.8 C705.8 249.9 704.9 253.9 709.7 239.0 C714.5 224.1 712.7 233.0 718.6 218.2 C724.5 203.4 722.1 209.3 727.5 194.5 C732.9 179.7 731.2 184.8 734.9 173.7 C738.6 162.6 737.3 165.4 738.5 161.3" stroke-width="6.600"/>
<path d="M693.4 212.9 C698.8 207.8 699.3 208.6 709.7 197.5 C720.1 186.4 715.1 191.7 724.5 179.7 C733.9 167.7 733.5 167.6 738.0 161.5" stroke-width="5.800"/>
<path d="M738.8 162.0 C739.0 167.9 738.1 165.9 739.3 179.7 C740.5 193.5 738.3 187.1 742.3 203.4 C746.3 219.7 748.2 220.2 751.2 228.6" stroke-width="5"/>
</svg>
</div>
</body></html>
